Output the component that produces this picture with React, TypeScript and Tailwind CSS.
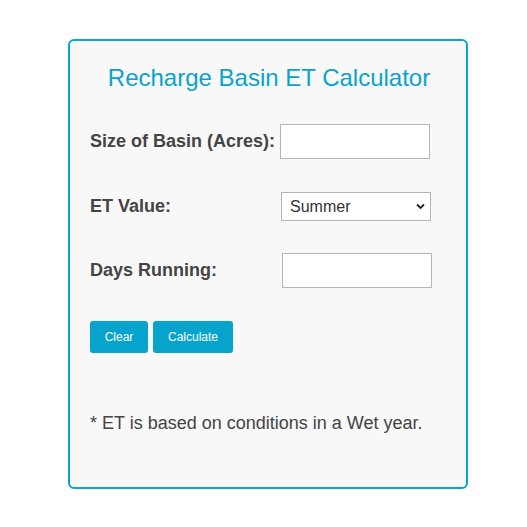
import React, { useState } from 'react';

const font = { fontFamily: '"Liberation Sans", Arial, sans-serif' };

export default function App() {
    const [acres, setAcres] = useState('');
    const [season, setSeason] = useState('Summer');
    const [days, setDays] = useState('');

    const clear = () => {
        setAcres('');
        setDays('');
        setSeason('Summer');
    };

    return (
        <div className="w-[527px] h-[527px] bg-white pt-[39px] pl-[68px]" style={font}>
            <div className="w-[400px] h-[450px] border-2 border-[#06a3cc] rounded-[6px] bg-[#f8f8f8] pt-[23px] pl-[20px]">
                <h1 className="text-[24px] leading-[27px] text-[#0aa3cc] text-center pr-[20px] ml-[2px]">
                    Recharge Basin ET Calculator
                </h1>

                <div className="mt-[33px] flex items-center h-[35px]">
                    <label className="w-[190px] text-[18px] font-bold text-[#444]">Size of Basin (Acres):</label>
                    <input
                        value={acres}
                        onChange={e => setAcres(e.target.value)}
                        className="w-[150px] h-[35px] border border-[#b5b5b5] bg-white outline-none px-2 text-[16px]"
                    />
                </div>

                <div className="mt-[33px] flex items-center h-[29px]">
                    <label className="w-[191px] text-[18px] font-bold text-[#444]">ET Value:</label>
                    <div className="relative w-[150px] h-[29px]">
                        <select
                            value={season}
                            onChange={e => setSeason(e.target.value)}
                            className="appearance-none w-full h-full border border-[#b5b5b5] bg-white outline-none pl-[8px] text-[16px] text-[#333]"
                        >
                            <option>Summer</option>
                            <option>Fall</option>
                            <option>Winter</option>
                            <option>Spring</option>
                        </select>
                        <svg className="absolute right-[6px] top-[11px] pointer-events-none" width="9" height="7" viewBox="0 0 9 7">
                            <path d="M1 1.5 L4.5 5 L8 1.5" fill="none" stroke="#222" strokeWidth="1.8" />
                        </svg>
                    </div>
                </div>

                <div className="mt-[32px] flex items-center h-[35px]">
                    <label className="w-[192px] text-[18px] font-bold text-[#444]">Days Running:</label>
                    <input
                        value={days}
                        onChange={e => setDays(e.target.value)}
                        className="w-[150px] h-[35px] border border-[#b5b5b5] bg-white outline-none px-2 text-[16px]"
                    />
                </div>

                <div className="mt-[33px] flex gap-[5px]">
                    <button
                        onClick={clear}
                        className="w-[58px] h-[32px] rounded-[3px] bg-[#06a3cc] text-white text-[12px]"
                    >
                        Clear
                    </button>
                    <button className="w-[80px] h-[32px] rounded-[3px] bg-[#06a3cc] text-white text-[12px]">
                        Calculate
                    </button>
                </div>

                <p className="mt-[60px] text-[18px] leading-[21px] text-[#444]">
                    * ET is based on conditions in a Wet year.
                </p>
            </div>
        </div>
    );
}
